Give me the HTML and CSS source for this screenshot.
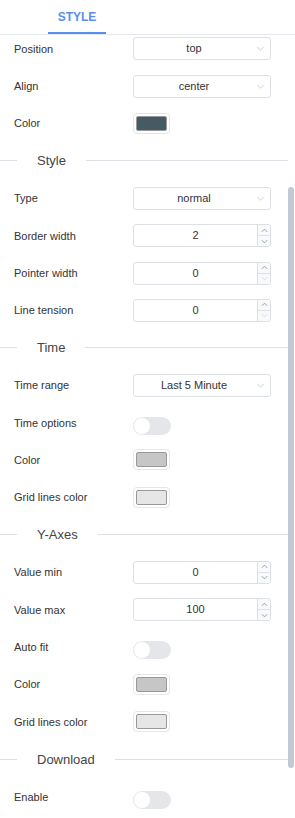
FILE: index.html
```html
<!DOCTYPE html>
<html lang="en">
<head>
    <title>Chart settings</title>
    <link rel="stylesheet" href="styles.css">
</head>
<body>

<!-- Tab header -->
<div class="tabs">
    <div class="tab active">STYLE</div>
</div>

<div class="panel">
    <div class="row"><span class="label">Position</span>
        <div class="select">top<svg class="chev" viewBox="0 0 10 6"><polyline points="1,1 5,5 9,1"/></svg></div></div>
    <div class="row"><span class="label">Align</span>
        <div class="select">center<svg class="chev" viewBox="0 0 10 6"><polyline points="1,1 5,5 9,1"/></svg></div></div>
    <div class="row"><span class="label">Color</span>
        <div class="swatch"><span class="swatch-fill dark"></span></div></div>

    <div class="divider"><span class="line-short"></span><span class="divider-text">Style</span><span class="line-long"></span></div>

    <div class="row"><span class="label">Type</span>
        <div class="select">normal<svg class="chev" viewBox="0 0 10 6"><polyline points="1,1 5,5 9,1"/></svg></div></div>
    <div class="row"><span class="label">Border width</span>
        <div class="number"><span class="num-value">2</span><span class="spin"><span class="up"><svg viewBox="0 0 8 5"><polyline points="1,4 4,1 7,4"/></svg></span><span class="down"><svg viewBox="0 0 8 5"><polyline points="1,1 4,4 7,1"/></svg></span></span></div></div>
    <div class="row"><span class="label">Pointer width</span>
        <div class="number"><span class="num-value">0</span><span class="spin"><span class="up"><svg viewBox="0 0 8 5"><polyline points="1,4 4,1 7,4"/></svg></span><span class="down off"><svg viewBox="0 0 8 5"><polyline points="1,1 4,4 7,1"/></svg></span></span></div></div>
    <div class="row"><span class="label">Line tension</span>
        <div class="number"><span class="num-value">0</span><span class="spin"><span class="up"><svg viewBox="0 0 8 5"><polyline points="1,4 4,1 7,4"/></svg></span><span class="down off"><svg viewBox="0 0 8 5"><polyline points="1,1 4,4 7,1"/></svg></span></span></div></div>

    <div class="divider"><span class="line-short"></span><span class="divider-text">Time</span><span class="line-long"></span></div>

    <div class="row"><span class="label">Time range</span>
        <div class="select">Last 5 Minute<svg class="chev" viewBox="0 0 10 6"><polyline points="1,1 5,5 9,1"/></svg></div></div>
    <div class="row"><span class="label">Time options</span>
        <div class="switch"><span class="knob"></span></div></div>
    <div class="row"><span class="label">Color</span>
        <div class="swatch"><span class="swatch-fill mid"></span></div></div>
    <div class="row"><span class="label">Grid lines color</span>
        <div class="swatch"><span class="swatch-fill light"></span></div></div>

    <div class="divider"><span class="line-short"></span><span class="divider-text">Y-Axes</span><span class="line-long"></span></div>

    <div class="row"><span class="label">Value min</span>
        <div class="number"><span class="num-value">0</span><span class="spin"><span class="up"><svg viewBox="0 0 8 5"><polyline points="1,4 4,1 7,4"/></svg></span><span class="down"><svg viewBox="0 0 8 5"><polyline points="1,1 4,4 7,1"/></svg></span></span></div></div>
    <div class="row"><span class="label">Value max</span>
        <div class="number"><span class="num-value">100</span><span class="spin"><span class="up"><svg viewBox="0 0 8 5"><polyline points="1,4 4,1 7,4"/></svg></span><span class="down"><svg viewBox="0 0 8 5"><polyline points="1,1 4,4 7,1"/></svg></span></span></div></div>
    <div class="row"><span class="label">Auto fit</span>
        <div class="switch"><span class="knob"></span></div></div>
    <div class="row"><span class="label">Color</span>
        <div class="swatch"><span class="swatch-fill mid"></span></div></div>
    <div class="row"><span class="label">Grid lines color</span>
        <div class="swatch"><span class="swatch-fill light"></span></div></div>

    <div class="divider"><span class="line-short"></span><span class="divider-text">Download</span><span class="line-long"></span></div>

    <div class="row"><span class="label">Enable</span>
        <div class="switch"><span class="knob"></span></div></div>
</div>

<!-- Scrollbar thumb (sits over the panel) -->
<div class="scroll-thumb"></div>

</body>
</html>
```

FILE: styles.css
```css
/* Reset and General Styles */
* {
    margin: 0;
    padding: 0;
    box-sizing: border-box;
}

body {
    font-family: 'Liberation Sans', Arial, sans-serif;
    font-size: 11px;
    color: #333;
    background: #fff;
    width: 295px;
    height: 818px;
    overflow: hidden;
    position: relative;
}

/* Tabs */
.tabs {
    position: relative;
    z-index: 1;
    height: 35px;
    background: #fff;
    border-bottom: 1px solid #e4e7ed;
    padding-left: 48px;
    display: flex;
}

.tab {
    width: 58px;
    height: 34px;
    line-height: 34px;
    text-align: center;
    font-size: 12px;
    font-weight: bold;
    color: #5b8def;
}

.tab.active {
    border-bottom: 2px solid #5b8def;
}

/* Panel */
.panel {
    margin-top: -5px;
    width: 288px;
}

.row {
    height: 37.4px;
    display: flex;
    align-items: center;
    padding: 0 17px 0 14px;
}

.label {
    width: 119px;
    flex-shrink: 0;
}

/* Select */
.select {
    position: relative;
    width: 138px;
    height: 23px;
    line-height: 21px;
    border: 1px solid #dcdfe6;
    border-radius: 3px;
    text-align: center;
    padding-right: 16px;
    color: #333;
}

.chev {
    position: absolute;
    right: 5px;
    top: 8px;
    width: 9px;
    height: 5px;
    fill: none;
    stroke: #c0c4cc;
    stroke-width: 1;
}

/* Number input */
.number {
    width: 138px;
    height: 23px;
    border: 1px solid #dcdfe6;
    border-radius: 3px;
    display: flex;
}

.num-value {
    flex: 1;
    text-align: center;
    line-height: 21px;
}

.spin {
    width: 13px;
    border-left: 1px solid #dcdfe6;
    display: flex;
    flex-direction: column;
    background: #f8f9fb;
    border-radius: 0 3px 3px 0;
}

.spin span {
    flex: 1;
    display: flex;
    align-items: center;
    justify-content: center;
}

.spin .up {
    border-bottom: 1px solid #dcdfe6;
}

.spin svg {
    width: 7px;
    height: 5px;
    fill: none;
    stroke: #909399;
    stroke-width: 1;
}

.spin .off svg {
    stroke: #d4d7dd;
}

/* Color swatch */
.swatch {
    width: 37px;
    height: 21px;
    border: 1px solid #e6e6e6;
    border-radius: 4px;
    padding: 2px;
}

.swatch-fill {
    display: block;
    height: 100%;
    border: 1px solid #999;
    border-radius: 2px;
}

.dark { background: #475a64; }
.mid { background: #c6c6c6; }
.light { background: #e6e6e6; }

/* Toggle switch */
.switch {
    width: 38px;
    height: 18px;
    margin-top: 6px;
    border-radius: 9px;
    background: #e4e6ea;
    padding: 1px;
}

.knob {
    display: block;
    width: 16px;
    height: 16px;
    border-radius: 50%;
    background: #fff;
}

/* Section divider */
.divider {
    height: 37.4px;
    display: flex;
    align-items: center;
}

.line-short {
    width: 17px;
    border-top: 1px solid #dcdfe6;
}

.line-long {
    flex: 1;
    border-top: 1px solid #dcdfe6;
}

.divider-text {
    padding: 0 20px;
    font-size: 13px;
    color: #444;
}

/* Fake scrollbar */
.scroll-thumb {
    position: absolute;
    top: 187px;
    right: 1px;
    width: 6px;
    height: 581px;
    border-radius: 3px;
    background: #c1c9d2;
}
```
